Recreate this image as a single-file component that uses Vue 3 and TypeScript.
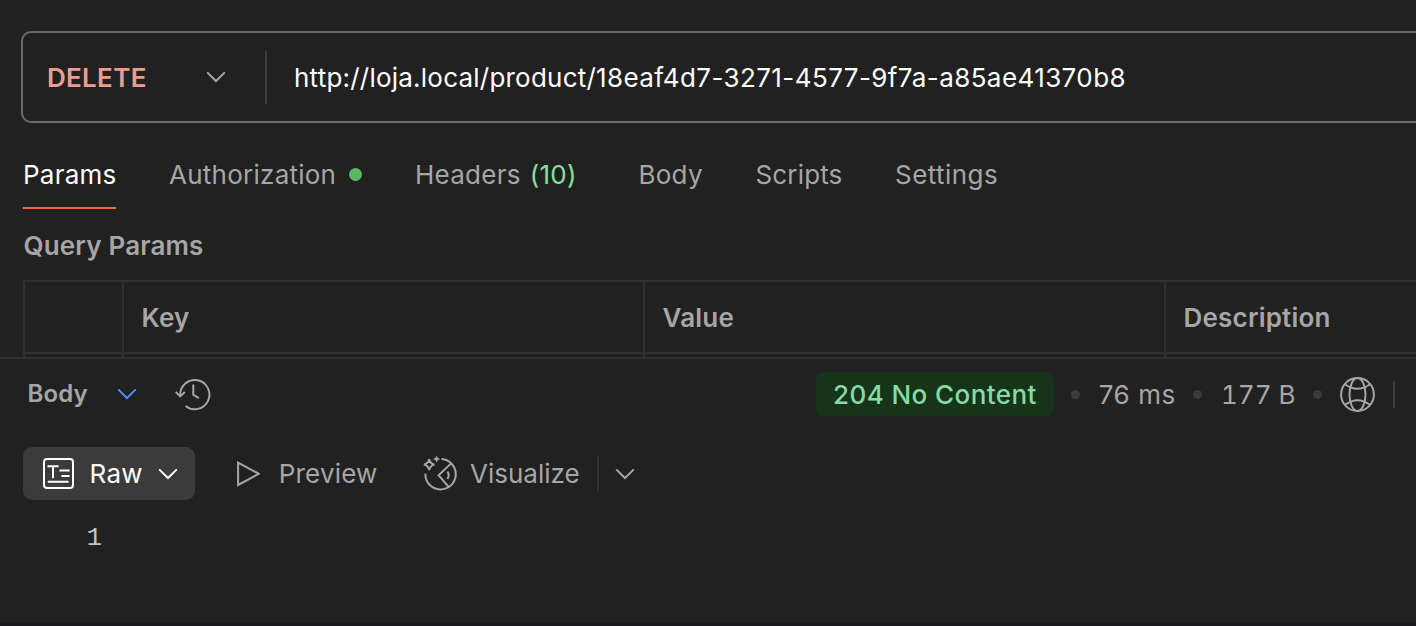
<script setup lang="ts">
interface Tab {
  id: string
  label: string
  count?: string
  dot?: boolean
}

const tabs: Tab[] = [
  { id: 'params', label: 'Params' },
  { id: 'authorization', label: 'Authorization', dot: true },
  { id: 'headers', label: 'Headers', count: '(10)' },
  { id: 'body', label: 'Body' },
  { id: 'scripts', label: 'Scripts' },
  { id: 'settings', label: 'Settings' },
]
const activeTab = 'params'
const columns: string[] = ['', 'Key', 'Value', 'Description']
</script>

<template>
  <main class="client">
    <section class="request">
      <div class="method">
        <span class="method-name">DELETE</span>
        <svg class="chevron" width="20" height="12" viewBox="0 0 20 12"><path d="M1.2 1.4 10 10 18.8 1.4" /></svg>
      </div>
      <span class="url">http://loja.local/product/<span class="uuid">18eaf4d7-3271-4577-9f7a-a85ae41370b8</span></span>
    </section>

    <nav class="tabs">
      <div v-for="tab in tabs" :key="tab.id" class="tab" :class="[tab.id, { active: tab.id === activeTab }]">
        <span class="label">{{ tab.label }}</span>
        <span v-if="tab.count" class="count">{{ tab.count }}</span>
        <i v-if="tab.dot" class="dot"></i>
      </div>
    </nav>

    <section class="params-pane">
      <h2 class="title">Query Params</h2>
      <div class="table">
        <div v-for="col in columns" :key="col" class="cell">{{ col }}</div>
        <div v-for="col in columns" :key="'row' + col" class="cell next"></div>
      </div>
    </section>

    <section class="response">
      <header class="bar">
        <span class="body-label">Body</span>
        <svg class="chevron blue" width="20" height="12" viewBox="0 0 20 12"><path d="M1.2 1.4 10 10 18.8 1.4" /></svg>
        <svg class="history" width="36" height="34" viewBox="0 0 36 34">
          <path d="M5.2 18.2A14.6 14.6 0 1 1 10.6 29" />
          <path d="M.8 15 5.2 19.4 9.8 15" />
          <path d="M18.3 7.6V17.8L23.8 21.2" />
        </svg>
        <div class="meta">
          <span class="status">204 No Content</span>
          <i class="sep"></i>
          <span class="time">76 ms</span>
          <i class="sep"></i>
          <span class="size">177 B</span>
          <i class="sep"></i>
          <svg class="globe" width="36" height="36" viewBox="0 0 36 36">
            <circle cx="17.5" cy="18.5" r="16.4" />
            <ellipse cx="17.5" cy="18.5" rx="8" ry="16.4" />
            <path d="M5 8.3Q17.5 17.3 30 8.3M5 28.7Q17.5 19.7 30 28.7" />
          </svg>
          <i class="end-rule"></i>
        </div>
      </header>

      <div class="views">
        <button class="raw" type="button">
          <svg class="raw-icon" width="32" height="32" viewBox="0 0 32 32">
            <rect x="1" y="1" width="29" height="29" rx="3" />
            <path d="M4.5 8.2H15.6M10 8.2V20.2M16.5 12.4H26.5M18.5 18H26.5M4.8 23.8H25.5" />
          </svg>
          <span>Raw</span>
          <svg class="chevron" width="20" height="12" viewBox="0 0 20 12"><path d="M1.2 1.4 10 10 18.8 1.4" /></svg>
        </button>
        <div class="view preview">
          <svg width="24" height="26" viewBox="0 0 24 26"><path d="M2.1 1.6V24L22.8 12.8Z" /></svg>
          <span>Preview</span>
        </div>
        <div class="view visualize">
          <svg width="36" height="36" viewBox="0 0 36 36">
            <path d="M19.6 3.1A15.2 15.2 0 1 1 3.4 17.6" />
            <path d="M28.8 7.6 16.6 19.2 27 31.4" />
            <path d="M25.4 15.6Q28 19.2 25.4 22.8" />
            <path d="M7.2 3.2Q8.2 7.6 12.4 8.6Q8.2 9.6 7.2 14Q6.2 9.6 2 8.6Q6.2 7.6 7.2 3.2Z" />
            <path class="spark" d="M14.6 .2Q15.1 2.4 17.6 3Q15.1 3.6 14.6 6Q14.1 3.6 11.6 3Q14.1 2.4 14.6 .2Z" />
          </svg>
          <span>Visualize</span>
        </div>
        <i class="view-rule"></i>
        <svg class="chevron" width="20" height="12" viewBox="0 0 20 12"><path d="M1.2 1.4 10 10 18.8 1.4" /></svg>
      </div>
      <pre class="code">1</pre>
    </section>
  </main>
</template>

<style>
html,
body {
  margin: 0;
  overflow: hidden;
  background: #212121;
}
</style>

<style scoped>
.client {
  box-sizing: border-box;
  width: 1416px;
  height: 626px;
  padding-top: 31px;
  overflow: hidden;
  background: #212121;
  border-bottom: 3px solid #1c1b1d;
  color: #a6a6a6;
  font: 400 26px/32px Inter, "Liberation Sans", sans-serif;
  white-space: nowrap;
}
svg {
  display: block;
  flex: none;
  fill: none;
  stroke: currentColor;
  stroke-width: 2;
}
.request {
  box-sizing: border-box;
  display: flex;
  align-items: center;
  width: 1440px;
  height: 92px;
  margin-left: 21px;
  border: 2px solid #6b6b6b;
  border-radius: 10px;
}
.method {
  box-sizing: border-box;
  display: flex;
  align-items: center;
  width: 244px;
  height: 53px;
  padding-left: 24px;
  border-right: 2px solid #3b3b3b;
}
.method-name {
  width: 159px;
  padding-top: 2px;
  color: #eb9d91;
  font-weight: 600;
  letter-spacing: 0.3px;
}
.url {
  padding-top: 2px;
  margin-left: 27px;
  color: #fff;
  letter-spacing: 0.22px;
}
.uuid { letter-spacing: 0.41px; }
.tabs {
  display: flex;
  height: 52px;
  margin: 34px 0 0 23px;
}
.tab {
  box-sizing: border-box;
  display: flex;
  align-items: center;
  height: 52px;
  padding-bottom: 16px;
  letter-spacing: 0.25px;
}
.tab.active {
  color: #fff;
  border-bottom: 2px solid #f26b3a;
  padding-bottom: 14px;
}
.params { width: 93px; margin-right: 53px; }
.authorization { width: 246px; }
.headers { width: 223.5px; }
.body { width: 117px; }
.scripts { width: 139.5px; letter-spacing: 0.15px; }
.settings { letter-spacing: 0.45px; }
.count {
  margin-left: 9px;
  color: #85e0a3;
}
.dot {
  width: 13px;
  height: 13px;
  margin: -1px 0 0 13px;
  border-radius: 50%;
  background: #58b961;
}
.params-pane {
  height: 148px;
  overflow: hidden;
}
.title {
  margin: 21px 0 18px 23.5px;
  font: inherit;
  font-weight: 600;
  letter-spacing: 0.16px;
}
.table {
  display: grid;
  grid-template-columns: 99px 521px 521px 300px;
  grid-template-rows: 72px 20px;
  margin-left: 23px;
  border-left: 2px solid #303030;
  border-top: 2px solid #303030;
}
.cell {
  box-sizing: border-box;
  padding: 20px 0 0 17.5px;
  border-right: 2px solid #303030;
  border-bottom: 2px solid #303030;
  font-weight: 600;
  letter-spacing: 0.2px;
}
.response {
  border-top: 2px solid #303030;
}
.bar {
  display: flex;
  align-items: center;
  height: 70px;
  padding-left: 27.5px;
}
.body-label {
  width: 89px;
  font-size: 24px;
  font-weight: 600;
  letter-spacing: 0.1px;
}
.blue {
  color: #4f8ff5;
}
.history {
  margin-left: 38.5px;
}
.meta {
  display: flex;
  align-items: center;
  margin-left: 605px;
}
.status {
  box-sizing: border-box;
  width: 238px;
  height: 44px;
  padding: 7px 0 0 17px;
  border-radius: 8px;
  background: #16341a;
  color: #85dba0;
  font-weight: 500;
  letter-spacing: 0.42px;
}
.sep {
  width: 9px;
  height: 9px;
  margin: 0 18px 0 17px;
  border-radius: 50%;
  background: #3b3b3b;
}
.time,
.size {
  box-sizing: border-box;
  width: 78px;
  padding: 2px 0 0 0.7px;
  letter-spacing: 0.6px;
}
.size {
  width: 76px;
  padding-left: 1px;
  font-variant-numeric: tabular-nums;
  letter-spacing: 0;
}
.end-rule,
.view-rule {
  width: 2px;
  height: 27px;
  margin-left: 17px;
  background: #3b3b3b;
}
.views {
  display: flex;
  align-items: center;
  height: 53px;
  margin: 18px 0 0 23px;
}
.raw {
  box-sizing: border-box;
  display: flex;
  align-items: center;
  width: 172px;
  height: 53px;
  padding: 0 0 0 20px;
  border: 0;
  border-radius: 9px;
  background: #3b3b3b;
  color: #fff;
  font: inherit;
}
.raw span {
  width: 68.5px;
  margin-left: 14.5px;
  text-align: left;
  letter-spacing: 0.3px;
}
.view {
  display: flex;
  align-items: center;
}
.preview {
  width: 186px;
  margin-left: 41px;
  letter-spacing: 0.2px;
}
.preview span { margin-left: 18.7px; }
.visualize { width: 175px; }
.visualize span { margin-left: 12px; }
.spark {
  fill: currentColor;
  stroke-width: 0.5;
}
.view-rule {
  height: 35px;
  margin: 0 16px 0 0;
  background: #303030;
}
.code {
  margin: 22px 0 0 86.5px;
  color: #c4c4c0;
  font: 26px/32px "Liberation Mono", monospace;
}
</style>
